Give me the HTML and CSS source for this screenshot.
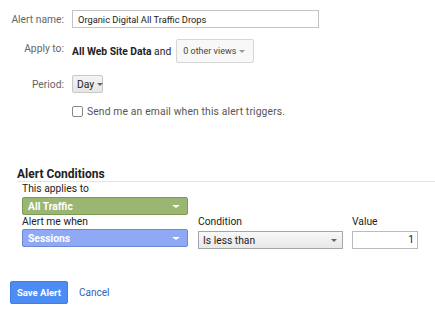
FILE: index.html
```html
<!DOCTYPE html>
<html lang="en">
<head>
    <meta charset="UTF-8">
    <title>Create Alert</title>
    <link rel="stylesheet" href="styles.css">
</head>
<body>
<div class="alertForm">
    <div class="formRow rowName">
        <div class="formLabel">Alert name:</div>
        <input type="text" class="nameInput" value="Organic Digital All Traffic Drops">
    </div>
    <div class="formRow rowApply">
        <div class="formLabel labelUp">Apply to:</div>
        <div class="applyValue"><b>All Web Site Data</b> and</div>
        <div class="viewsButton"><span>0 other views</span><span class="caret"></span></div>
    </div>
    <div class="formRow rowPeriod">
        <div class="formLabel">Period:</div>
        <div class="dayButton">Day <span class="caret"></span></div>
    </div>
    <div class="formRow rowEmail">
        <div class="formLabel"></div>
        <label class="emailCheck"><span class="checkBox"></span>Send me an email when this alert triggers.</label>
    </div>
</div>

<div class="conditions">
    <div class="condTitle">Alert Conditions</div>
    <div class="condBody">
        <div class="condLabel">This applies to</div>
        <div class="pick pickGreen">All Traffic <span class="caret caretWhite"></span></div>
        <div class="condGrid">
            <div class="condCol colMetric">
                <div class="condLabel">Alert me when</div>
                <div class="pick pickBlue">Sessions <span class="caret caretWhite"></span></div>
            </div>
            <div class="condCol colCondition">
                <div class="condLabel">Condition</div>
                <div class="selectBox">Is less than <span class="caret"></span></div>
            </div>
            <div class="condCol">
                <div class="condLabel">Value</div>
                <div class="valueBox">1</div>
            </div>
        </div>
    </div>
</div>

<div class="actions">
    <div class="saveButton">Save Alert</div>
    <div class="cancelLink">Cancel</div>
</div>
</body>
</html>
```

FILE: styles.css
```css
body{
    margin: 0;
    font-family: Roboto, "Liberation Sans", sans-serif;
    font-size: 10.3px;
    color: #222;
    background: #fff;
}
.alertForm{
    padding-top: 10px;
}
.formRow{
    display: flex;
    align-items: center;
}
.formLabel{
    width: 64px;
    margin-right: 8px;
    text-align: right;
    color: #666;
    font-size: 10.3px;
    flex-shrink: 0;
}
.labelUp{
    position: relative;
    top: -3px;
}
.rowApply{
    margin-top: 11px;
}
.rowPeriod{
    margin-top: 12px;
}
.rowEmail{
    margin-top: 12px;
}
.nameInput{
    width: 247px;
    height: 18px;
    box-sizing: border-box;
    border: 1px solid #c4c4c4;
    margin: 0;
    padding: 0 5px;
    font-family: Roboto, "Liberation Sans", sans-serif;
    font-size: 9.3px;
    color: #222;
    outline: none;
}
.applyValue{
    white-space: nowrap;
}
.applyValue b{
    font-weight: bold;
}
.viewsButton{
    margin-left: 5px;
    height: 24px;
    width: 78px;
    flex-shrink: 0;
    box-sizing: border-box;
    border: 1px solid #d6d6d6;
    border-radius: 2px;
    background: #f8f8f8;
    display: flex;
    align-items: center;
    justify-content: space-between;
    padding: 0 8px 0 6px;
    white-space: nowrap;
    color: #444;
    font-size: 9px;
}
.viewsButton .caret{
    border-top-color: #999;
}
.caret{
    display: inline-block;
    width: 0;
    height: 0;
    border-left: 3px solid transparent;
    border-right: 3px solid transparent;
    border-top: 3px solid #666;
}
.caretWhite{
    border-top-color: #fff;
    border-left-width: 4px;
    border-right-width: 4px;
}
.dayButton{
    height: 18px;
    width: 31px;
    box-sizing: border-box;
    border: 1px solid #c8c8c8;
    border-radius: 2px;
    background: linear-gradient(#f4f4f4, #e6e6e6);
    display: flex;
    align-items: center;
    padding-left: 4px;
    color: #222;
}
.dayButton .caret{
    margin-left: 3px;
}
.emailCheck{
    display: flex;
    align-items: center;
    color: #555;
    letter-spacing: 0.15px;
}
.checkBox{
    width: 9px;
    height: 9px;
    border: 1px solid #888;
    border-radius: 2px;
    margin-right: 4px;
    background: #fff;
}
.conditions{
    margin-top: 49px;
    padding-left: 17px;
}
.condTitle{
    font-size: 12px;
    line-height: 14px;
    font-weight: bold;
    color: #222;
    border-bottom: 1px solid #e4e4e4;
}
.condBody{
    padding-left: 5px;
}
.condLabel{
    color: #222;
    height: 14px;
    line-height: 14px;
}
.pick{
    width: 166px;
    height: 18px;
    box-sizing: border-box;
    border-radius: 2px;
    display: flex;
    align-items: center;
    justify-content: space-between;
    padding: 0 7px 0 5px;
    color: #fff;
    font-weight: bold;
}
.pickGreen{
    margin-top: 1px;
    background: #9bb673;
    border: 1px solid #7d9a56;
}
.pickBlue{
    background: #8fa9f4;
    border: 1px solid #6c87d6;
}
.condGrid{
    display: flex;
    align-items: flex-start;
}
.colMetric{
    margin-right: 10px;
}
.colCondition{
    margin-right: 9px;
}
.selectBox{
    width: 145px;
    height: 18px;
    box-sizing: border-box;
    border: 1px solid #a6a6a6;
    background: linear-gradient(#f8f8f8, #e8e8e8);
    display: flex;
    align-items: center;
    justify-content: space-between;
    padding: 0 5px 0 4px;
    margin-top: 2px;
    color: #222;
}
.valueBox{
    width: 66px;
    height: 18px;
    box-sizing: border-box;
    border: 1px solid #bbb;
    margin-top: 2px;
    text-align: right;
    padding-right: 3px;
    line-height: 16px;
    color: #222;
}
.actions{
    display: flex;
    align-items: center;
    margin-top: 32px;
    padding-left: 10px;
}
.saveButton{
    width: 58px;
    height: 23px;
    box-sizing: border-box;
    background: #4d8cf5;
    border: 1px solid #3f7de8;
    border-radius: 2px;
    color: #fff;
    font-weight: bold;
    font-size: 9.5px;
    display: flex;
    align-items: center;
    justify-content: center;
}
.cancelLink{
    margin-left: 11px;
    color: #2a63b8;
    font-size: 10px;
}
```
